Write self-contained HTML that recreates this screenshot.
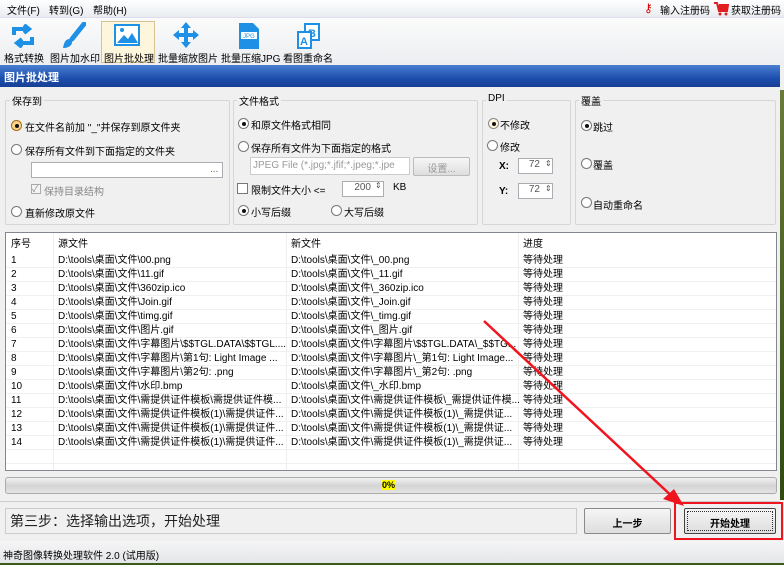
<!DOCTYPE html>
<html><head><meta charset="utf-8">
<style>
*{margin:0;padding:0;box-sizing:border-box}
body{width:784px;height:565px;overflow:hidden;background:#f0f0f0;font-family:"Liberation Sans","Noto Sans CJK SC",sans-serif;font-size:10px;color:#000;position:relative}
.a{position:absolute;white-space:nowrap}
.menu{left:0;top:0;width:784px;height:17px;background:linear-gradient(#fff,#e9ecf0)}
.tb{left:0;top:17px;width:784px;height:47px;background:linear-gradient(#fbfbfb,#eceef1);border-top:1px solid #dde}
.tl{font-size:10px;top:50px}
.title{left:0;top:65px;width:780px;height:22px;background:linear-gradient(#4a7fd1,#1d4fae 60%,#163f93);color:#fff;font-weight:bold;font-size:11px;padding:4px 0 0 4px}
.gb{border:1px solid #d6d6d6;border-radius:2px}
.gt{background:#f0f0f0;padding:0 2px;font-size:10px}
.rad{width:11px;height:11px;border:1px solid #777;border-radius:50%;background:#fff;display:inline-block;position:absolute}
.rad.on::after{content:"";position:absolute;left:2.5px;top:2.5px;width:4px;height:4px;border-radius:50%;background:#111}
.rad.or{background:#fbd38a;border-color:#a86a10}
.inp{background:#fff;border:1px solid #abadb3}
.list{left:5px;top:232px;width:772px;height:239px;background:#fff;border:1px solid #828790}
.row{position:absolute;left:0;width:770px;height:14px;border-bottom:1px solid #eef0f2;font-size:10px}
.row span{position:absolute;top:0;line-height:13px;height:13px}
.btn{border:1px solid #8a8a8a;border-radius:2px;background:linear-gradient(#f6f6f6,#dedede);text-align:center;font-weight:bold;font-size:10px}
</style></head><body>
<div class="a menu"></div>
<div class="a" style="left:7px;top:2px">文件(F)</div>
<div class="a" style="left:49px;top:2px">转到(G)</div>
<div class="a" style="left:93px;top:2px">帮助(H)</div>
<div class="a" style="left:644px;top:1px;color:#d00;font-size:12px">&#x26B7;</div>
<div class="a" style="left:660px;top:2px">输入注册码</div>
<svg class="a" style="left:713px;top:1px" width="16" height="15"><path d="M1 2h3l2 8h8l1-6H6" fill="#e02020" stroke="#e02020" stroke-width="2"/><circle cx="7" cy="13" r="1.5" fill="#e02020"/><circle cx="13" cy="13" r="1.5" fill="#e02020"/></svg>
<div class="a" style="left:731px;top:2px">获取注册码</div>
<div class="a tb"></div>
<div class="a" style="left:101px;top:21px;width:54px;height:42px;background:#fdf5dc;border:1px solid #d6c394"></div>
<svg class="a" style="left:10px;top:24px" width="26" height="24"><path d="M4 11V5h14M14 1l5 4-5 4M22 13v6H8M12 23l-5-4 5-4" fill="none" stroke="#1e90e6" stroke-width="4"/></svg>
<svg class="a" style="left:60px;top:22px" width="26" height="28"><path d="M24 2L12 17" stroke="#1e90e6" stroke-width="5" stroke-linecap="round"/><path d="M10 17c-5 0-6 4-7 9 6 0 10-3 9-8z" fill="#1e90e6"/></svg>
<svg class="a" style="left:114px;top:24px" width="26" height="22"><rect x="1" y="1" width="24" height="20" fill="#fff" stroke="#1e90e6" stroke-width="2"/><path d="M3 19l7-8 4 4 4-6 6 10z" fill="#1e90e6"/><circle cx="8" cy="6" r="2" fill="#1e90e6"/></svg>
<svg class="a" style="left:172px;top:21px" width="28" height="28"><path d="M14 1l5 6h-3v5h5V9l6 5-6 5v-3h-5v5h3l-5 6-5-6h3v-5H7v3l-6-5 6-5v3h5V7H9z" fill="#1e90e6"/></svg>
<svg class="a" style="left:237px;top:22px" width="24" height="28"><path d="M2 1h14l6 6v20H2z" fill="#1e90e6"/><rect x="4" y="10" width="16" height="7" fill="#fff"/><text x="6" y="16" font-size="6" fill="#1e90e6" font-family="Liberation Sans">JPG</text></svg>
<svg class="a" style="left:296px;top:22px" width="26" height="28"><rect x="9" y="2" width="14" height="16" fill="#fff" stroke="#1e90e6" stroke-width="2"/><text x="12" y="15" font-size="11" fill="#1e90e6" font-weight="bold" font-family="Liberation Sans">B</text><rect x="2" y="10" width="13" height="16" fill="#fff" stroke="#1e90e6" stroke-width="2"/><text x="4" y="23" font-size="11" fill="#1e90e6" font-weight="bold" font-family="Liberation Sans">A</text></svg>
<div class="a tl" style="left:4px">格式转换</div>
<div class="a tl" style="left:50px">图片加水印</div>
<div class="a tl" style="left:104px">图片批处理</div>
<div class="a tl" style="left:158px">批量缩放图片</div>
<div class="a tl" style="left:221px">批量压缩JPG</div>
<div class="a tl" style="left:283px">看图重命名</div>
<div class="a title">图片批处理</div>

<div class="a gb" style="left:5px;top:100px;width:225px;height:125px"></div>
<div class="a gt" style="left:10px;top:93px">保存到</div>
<span class="rad on or" style="left:11px;top:120px"></span><div class="a" style="left:25px;top:119px">在文件名前加 "_"并保存到原文件夹</div>
<span class="rad" style="left:11px;top:144px"></span><div class="a" style="left:25px;top:143px">保存所有文件到下面指定的文件夹</div>
<div class="a inp" style="left:31px;top:162px;width:192px;height:16px"></div><div class="a" style="left:210px;top:164px;color:#666">...</div>
<div class="a" style="left:31px;top:184px;width:10px;height:10px;border:1px solid #aaa;background:#f4f4f4;font-size:9px;line-height:8px;color:#888">✓</div>
<div class="a" style="left:44px;top:183px;color:#888">保持目录结构</div>
<span class="rad" style="left:11px;top:206px"></span><div class="a" style="left:25px;top:205px">直新修改原文件</div>

<div class="a gb" style="left:233px;top:100px;width:245px;height:125px"></div>
<div class="a gt" style="left:237px;top:93px">文件格式</div>
<span class="rad on" style="left:238px;top:118px"></span><div class="a" style="left:251px;top:117px">和原文件格式相同</div>
<span class="rad" style="left:238px;top:141px"></span><div class="a" style="left:251px;top:140px">保存所有文件为下面指定的格式</div>
<div class="a inp" style="left:250px;top:157px;width:160px;height:18px;border-color:#ccc;color:#999;padding:2px 2px;overflow:hidden">JPEG File (*.jpg;*.jfif;*.jpeg;*.jpe</div>
<div class="a btn" style="left:413px;top:157px;width:57px;height:19px;font-weight:normal;color:#999;padding-top:2px;border-color:#bbb">设置...</div>
<div class="a" style="left:237px;top:183px;width:11px;height:11px;border:1px solid #777;background:#fff"></div><div class="a" style="left:251px;top:182px">限制文件大小 &lt;=</div>
<div class="a inp" style="left:342px;top:181px;width:42px;height:16px;text-align:right;padding:0 12px 0 0;color:#555">200</div><div class="a" style="left:375px;top:181px;font-size:8px;color:#555">⇕</div>
<div class="a" style="left:393px;top:182px">KB</div>
<span class="rad on" style="left:238px;top:205px"></span><div class="a" style="left:251px;top:204px">小写后缀</div>
<span class="rad" style="left:331px;top:205px"></span><div class="a" style="left:344px;top:204px">大写后缀</div>

<div class="a gb" style="left:482px;top:100px;width:89px;height:125px"></div>
<div class="a gt" style="left:486px;top:93px">DPI</div>
<span class="rad on or" style="left:488px;top:118px;background:#fff6dd;border-color:#888"></span><div class="a" style="left:500px;top:117px">不修改</div>
<span class="rad" style="left:487px;top:140px"></span><div class="a" style="left:500px;top:139px">修改</div>
<div class="a" style="left:499px;top:161px;font-weight:bold">X:</div><div class="a inp" style="left:518px;top:158px;width:35px;height:16px;text-align:right;padding:0 12px 0 0;color:#555">72</div><div class="a" style="left:545px;top:159px;font-size:8px;color:#555">⇕</div>
<div class="a" style="left:499px;top:186px;font-weight:bold">Y:</div><div class="a inp" style="left:518px;top:183px;width:35px;height:16px;text-align:right;padding:0 12px 0 0;color:#555">72</div><div class="a" style="left:545px;top:184px;font-size:8px;color:#555">⇕</div>

<div class="a gb" style="left:575px;top:100px;width:201px;height:125px"></div>
<div class="a gt" style="left:579px;top:93px">覆盖</div>
<span class="rad on" style="left:581px;top:120px"></span><div class="a" style="left:593px;top:119px">跳过</div>
<span class="rad" style="left:581px;top:158px"></span><div class="a" style="left:593px;top:157px">覆盖</div>
<span class="rad" style="left:581px;top:197px"></span><div class="a" style="left:593px;top:197px">自动重命名</div>
<div class="a" style="left:780px;top:90px;width:4px;height:410px;background:linear-gradient(#6a7a3a,#2f4a10)"></div>

<div class="a list">
<div class="a" style="left:47px;top:0;width:1px;height:237px;background:#eee"></div>
<div class="a" style="left:280px;top:0;width:1px;height:237px;background:#eee"></div>
<div class="a" style="left:512px;top:0;width:1px;height:237px;background:#eee"></div>
<div class="row" style="top:5px;height:16px;border:0"><span style="left:5px">序号</span><span style="left:52px">源文件</span><span style="left:285px">新文件</span><span style="left:517px">进度</span></div>
<div class="row" style="top:21px"><span style="left:5px">1</span><span style="left:52px">D:\tools\桌面\文件\00.png</span><span style="left:285px">D:\tools\桌面\文件\_00.png</span><span style="left:517px">等待处理</span></div>
<div class="row" style="top:35px"><span style="left:5px">2</span><span style="left:52px">D:\tools\桌面\文件\11.gif</span><span style="left:285px">D:\tools\桌面\文件\_11.gif</span><span style="left:517px">等待处理</span></div>
<div class="row" style="top:49px"><span style="left:5px">3</span><span style="left:52px">D:\tools\桌面\文件\360zip.ico</span><span style="left:285px">D:\tools\桌面\文件\_360zip.ico</span><span style="left:517px">等待处理</span></div>
<div class="row" style="top:63px"><span style="left:5px">4</span><span style="left:52px">D:\tools\桌面\文件\Join.gif</span><span style="left:285px">D:\tools\桌面\文件\_Join.gif</span><span style="left:517px">等待处理</span></div>
<div class="row" style="top:77px"><span style="left:5px">5</span><span style="left:52px">D:\tools\桌面\文件\timg.gif</span><span style="left:285px">D:\tools\桌面\文件\_timg.gif</span><span style="left:517px">等待处理</span></div>
<div class="row" style="top:91px"><span style="left:5px">6</span><span style="left:52px">D:\tools\桌面\文件\图片.gif</span><span style="left:285px">D:\tools\桌面\文件\_图片.gif</span><span style="left:517px">等待处理</span></div>
<div class="row" style="top:105px"><span style="left:5px">7</span><span style="left:52px">D:\tools\桌面\文件\字幕图片\$$TGL.DATA\$$TGL....</span><span style="left:285px">D:\tools\桌面\文件\字幕图片\$$TGL.DATA\_$$TG...</span><span style="left:517px">等待处理</span></div>
<div class="row" style="top:119px"><span style="left:5px">8</span><span style="left:52px">D:\tools\桌面\文件\字幕图片\第1句: Light Image ...</span><span style="left:285px">D:\tools\桌面\文件\字幕图片\_第1句: Light Image...</span><span style="left:517px">等待处理</span></div>
<div class="row" style="top:133px"><span style="left:5px">9</span><span style="left:52px">D:\tools\桌面\文件\字幕图片\第2句: .png</span><span style="left:285px">D:\tools\桌面\文件\字幕图片\_第2句: .png</span><span style="left:517px">等待处理</span></div>
<div class="row" style="top:147px"><span style="left:5px">10</span><span style="left:52px">D:\tools\桌面\文件\水印.bmp</span><span style="left:285px">D:\tools\桌面\文件\_水印.bmp</span><span style="left:517px">等待处理</span></div>
<div class="row" style="top:161px"><span style="left:5px">11</span><span style="left:52px">D:\tools\桌面\文件\需提供证件模板\需提供证件模...</span><span style="left:285px">D:\tools\桌面\文件\需提供证件模板\_需提供证件模...</span><span style="left:517px">等待处理</span></div>
<div class="row" style="top:175px"><span style="left:5px">12</span><span style="left:52px">D:\tools\桌面\文件\需提供证件模板(1)\需提供证件...</span><span style="left:285px">D:\tools\桌面\文件\需提供证件模板(1)\_需提供证...</span><span style="left:517px">等待处理</span></div>
<div class="row" style="top:189px"><span style="left:5px">13</span><span style="left:52px">D:\tools\桌面\文件\需提供证件模板(1)\需提供证件...</span><span style="left:285px">D:\tools\桌面\文件\需提供证件模板(1)\_需提供证...</span><span style="left:517px">等待处理</span></div>
<div class="row" style="top:203px"><span style="left:5px">14</span><span style="left:52px">D:\tools\桌面\文件\需提供证件模板(1)\需提供证件...</span><span style="left:285px">D:\tools\桌面\文件\需提供证件模板(1)\_需提供证...</span><span style="left:517px">等待处理</span></div>
<div class="row" style="top:217px"></div>
</div>

<div class="a" style="left:5px;top:477px;width:772px;height:17px;border:1px solid #aaa;border-radius:3px;background:linear-gradient(#f2f2f2,#d4d4d4 50%,#e4e4e4)"></div>
<div class="a" style="left:382px;top:480px;font-weight:bold;font-size:9px;background:#ff0;line-height:10px">0%</div>
<div class="a" style="left:0;top:501px;width:780px;height:1px;background:#ccc"></div>
<div class="a" style="left:5px;top:508px;width:572px;height:26px;border:1px solid #ccc;background:#f0f0f0;font-size:14px;line-height:18px;padding:3px 0 0 4px;color:#222">第三步：选择输出选项，开始处理</div>
<div class="a btn" style="left:584px;top:508px;width:87px;height:26px;padding-top:6px">上一步</div>
<div class="a btn" style="left:684px;top:508px;width:92px;height:26px;padding-top:6px;border-color:#444"><div style="position:absolute;left:2px;top:2px;right:2px;bottom:2px;border:1px dotted #333"></div>开始处理</div>
<div class="a" style="left:674px;top:502px;width:109px;height:38px;border:2px solid #f0141e"></div>
<svg class="a" style="left:0;top:0" width="784" height="565"><line x1="484" y1="321" x2="676" y2="500" stroke="#f0141e" stroke-width="2.5"/><path d="M684 506L663 499L674 489Z" fill="#f0141e"/></svg>
<div class="a" style="left:0;top:541px;width:784px;height:24px;background:linear-gradient(#f5f5f5,#e3e5e8)"></div>
<div class="a" style="left:3px;top:547px;font-size:10px">神奇图像转换处理软件 2.0 (试用版)</div>
<div class="a" style="left:0;top:563px;width:784px;height:2px;background:#3a5a1a"></div>
</body></html>
